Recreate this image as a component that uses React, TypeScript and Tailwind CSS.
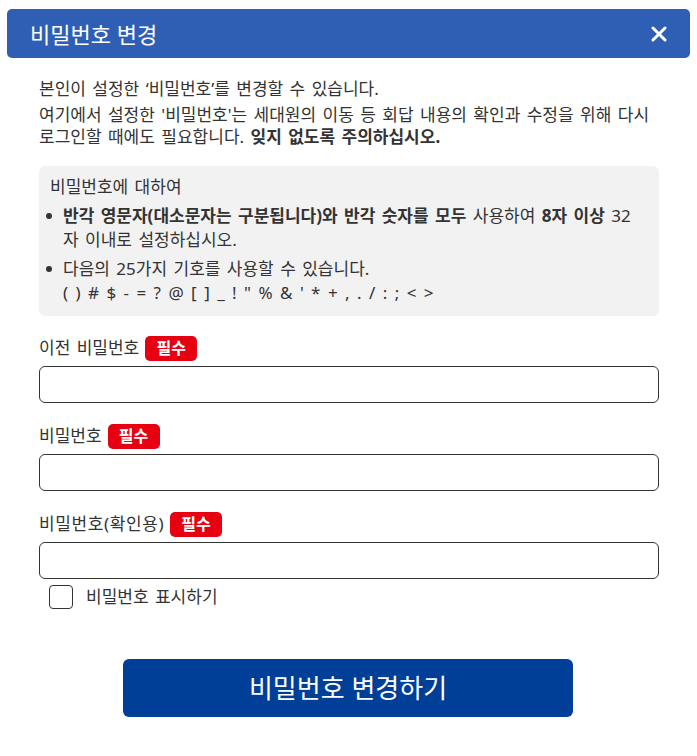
import React from "react";

const Badge = () => (
  <span className="ml-[6px] inline-flex h-[25px] w-[52px] items-center justify-center rounded-[5px] bg-[#e60012] text-[16px] font-bold leading-none text-white [word-spacing:0]">
    필수
  </span>
);

function Field({ label, wide }: { label: string; wide?: boolean }) {
  return (
    <div className="flex flex-col">
      <div className="flex h-[26px] items-center">
        <span className={wide ? "text-[17px] leading-[26px] tracking-[0.6px] text-[#333]" : "text-[17px] leading-[26px] text-[#333]"}>
          {label}
        </span>
        <Badge />
      </div>
      <input
        type="password"
        className="mt-[5px] h-[37px] w-full rounded-[6px] border border-[#333] bg-white px-2 outline-none"
      />
    </div>
  );
}

export default function App() {
  return (
    <div
      className="min-h-[756px] w-[697px] bg-white text-[#333] [word-spacing:2px]"
      style={{ fontFamily: '"Noto Sans", "Noto Sans CJK KR", sans-serif' }}
    >
      <div className="px-[7px] pt-[9px]">
        <div className="flex h-[49px] items-center justify-between rounded-[5px] bg-[#2f5fb4] pl-[23px] pr-[23px]">
          <span className="text-[22px] leading-none text-white [word-spacing:0]">비밀번호 변경</span>
          <svg width="16" height="16" viewBox="0 0 16 16">
            <path d="M2 2 L14 14 M14 2 L2 14" stroke="white" strokeWidth="3" strokeLinecap="round" />
          </svg>
        </div>
      </div>
      <div className="pl-[39px] pr-[38px]">
        <p className="mt-[20px] text-[17px] leading-[22px]">본인이 설정한 ‘비밀번호’를 변경할 수 있습니다.</p>
        <p className="mt-[4px] text-[17px] leading-[22px]">
          여기에서 설정한 '비밀번호'는 세대원의 이동 등 회답 내용의 확인과 수정을 위해 다시 로그인할 때에도 필요합니다.{" "}
          <b className="font-bold">잊지 없도록 주의하십시오.</b>
        </p>
        <div className="mt-[18px] rounded-[6px] bg-[#f2f2f2] pb-[11px] pl-[11px] pr-[24px] pt-[9px]">
          <p className="text-[17px] leading-[24px]">비밀번호에 대하여</p>
          <ul className="mt-[5px] text-[17px] leading-[24px]">
            <li className="relative pl-[13px]">
              <span className="absolute left-[-4px] top-[9px] h-[6px] w-[6px] rounded-full bg-[#333]" />
              <b className="font-bold">반각 영문자(대소문자는 구분됩니다)와 반각 숫자를 모두</b> 사용하여{" "}
              <b className="font-bold">8자 이상</b> 32자 이내로 설정하십시오.
            </li>
            <li className="relative mt-[5px] pl-[13px]">
              <span className="absolute left-[-4px] top-[9px] h-[6px] w-[6px] rounded-full bg-[#333]" />
              다음의 25가지 기호를 사용할 수 있습니다.
              <br />
              <span className="[word-spacing:3px]">
                ( ) # $ - = ? @ [ ] _ ! " % &amp; ' * + , . / : ; &lt; &gt;
              </span>
            </li>
          </ul>
        </div>
        <div className="mt-[19px] flex flex-col gap-[20px]">
          <Field label="이전 비밀번호" />
          <Field label="비밀번호" />
          <Field label="비밀번호(확인용)" wide />
        </div>
        <label className="mt-[6px] flex items-center pl-[10px]">
          <span className="h-[24px] w-[24px] rounded-[4px] border border-[#333] bg-white" />
          <span className="ml-[13px] text-[17px] leading-[24px]">비밀번호 표시하기</span>
        </label>
        <div className="mt-[50px] flex justify-center">
          <button className="ml-[-2px] h-[58px] w-[450px] rounded-[6px] bg-[#003f98] text-[26px] leading-none text-white [word-spacing:0]">
            비밀번호 변경하기
          </button>
        </div>
      </div>
    </div>
  );
}
